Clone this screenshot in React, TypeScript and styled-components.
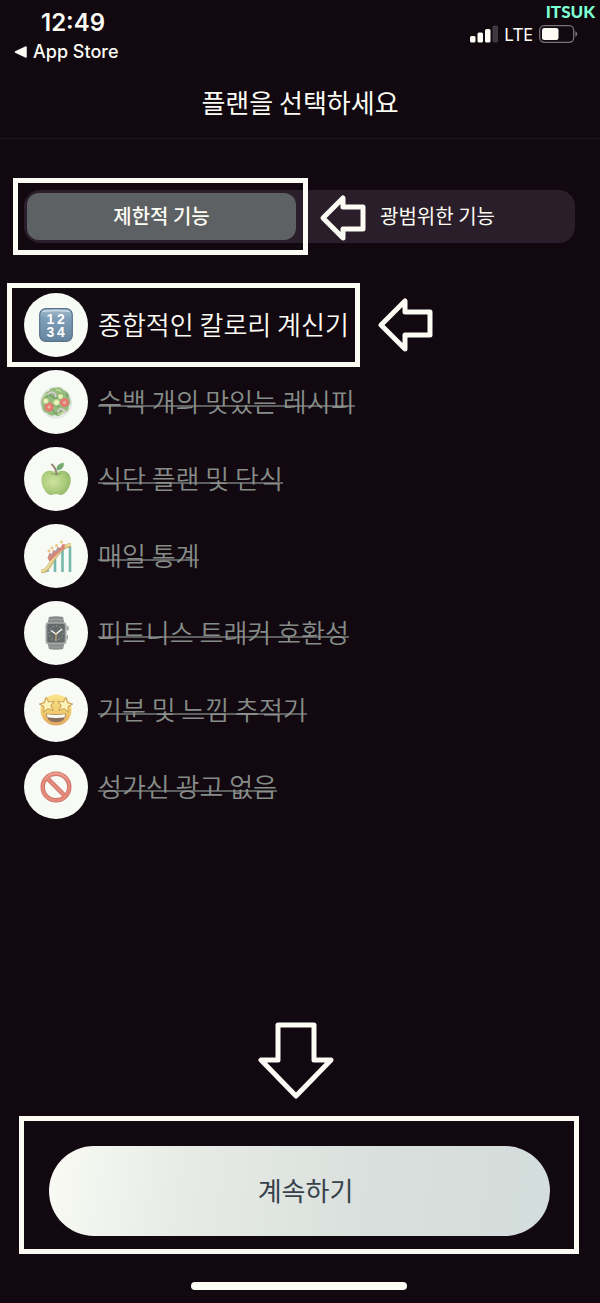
import React, { useState } from 'react';
import styled, { createGlobalStyle, css } from 'styled-components';

const ivory = '#fcfcf4';
const night = '#110810';

const GlobalStyle = createGlobalStyle`
  *, *::before, *::after { box-sizing: border-box; }
  body {
    margin: 0;
    background: ${night};
    color: ${ivory};
    font-family: 'Noto Sans CJK KR', sans-serif;
  }
  button { font-family: inherit; border: 0; padding: 0; cursor: pointer; }
`;

const Screen = styled.div`
  min-height: 100vh;
  display: flex;
  flex-direction: column;
  background: ${night};
`;

const StatusBar = styled.header`
  position: relative;
  display: flex;
  justify-content: space-between;
  align-items: flex-start;
  height: 68px;
  padding: 8px 22px 0 14px;
  font-family: Inter, sans-serif;
`;

const ClockGroup = styled.div`
  display: flex;
  flex-direction: column;
`;

const Clock = styled.time`
  padding-left: 27px;
  font-size: 24px;
  line-height: 30px;
  font-weight: 600;
`;

const BackLink = styled.a`
  display: flex;
  align-items: center;
  gap: 6px;
  color: inherit;
  text-decoration: none;
  font-size: 18px;
  line-height: 28px;
  font-weight: 500;
`;

const Signals = styled.div`
  display: flex;
  align-items: center;
  gap: 6px;
  padding-top: 16px;
`;

const Network = styled.span`
  font-family: 'Noto Sans', sans-serif;
  font-size: 18px;
  line-height: 20px;
`;

const Watermark = styled.span`
  position: absolute;
  top: 2px;
  right: 5px;
  color: #7dffd2;
  font-family: Lato, sans-serif;
  font-size: 17px;
  line-height: 20px;
  font-weight: 900;
`;

const TitleBar = styled.div`
  display: flex;
  justify-content: center;
  align-items: center;
  height: 71px;
  padding-bottom: 2px;
  border-bottom: 1px solid #1c131b;
`;

const Title = styled.h1`
  margin: 0;
  font-size: 26px;
  line-height: 36px;
  font-weight: 400;
`;

const Content = styled.main`
  flex: 1;
  display: flex;
  flex-direction: column;
  padding: 51px 25px 0 24px;
`;

const Tabs = styled.div`
  display: grid;
  grid-template-columns: 1fr 1fr;
  gap: 7px;
  height: 53px;
  padding: 3px;
  border-radius: 16px;
  background: #2a1e2a;
`;

const TabCell = styled.div`
  position: relative;
  display: grid;
`;

const Tab = styled.button<{ $active: boolean }>`
  padding-bottom: 2px;
  border-radius: 12px;
  background: ${({ $active }) => ($active ? '#5e6163' : 'transparent')};
  color: ${ivory};
  font-size: 20px;
  line-height: 28px;
  font-weight: ${({ $active }) => ($active ? 500 : 400)};
`;

const frame = css`
  border: 5px solid ${ivory};
`;

const TabFrame = styled.span`
  ${frame}
  position: absolute;
  inset: -15px -12px -15px -14px;
  pointer-events: none;
`;

const Pointer = styled.span<{ $gap: number }>`
  position: absolute;
  z-index: 1;
  top: 0;
  bottom: 0;
  left: calc(100% + ${({ $gap }) => $gap}px);
  display: flex;
  align-items: center;
  pointer-events: none;
`;

const Features = styled.ul`
  display: flex;
  flex-direction: column;
  align-items: flex-start;
  gap: 13px;
  margin: 50px 0 40px;
  padding: 0;
  list-style: none;
`;

const Feature = styled.li`
  position: relative;
  display: flex;
  align-items: center;
  gap: 10px;
`;

const FeatureFrame = styled.span`
  ${frame}
  position: absolute;
  inset: -10px -11px -10px -17px;
  pointer-events: none;
`;

const Badge = styled.span<{ $included: boolean }>`
  display: grid;
  place-items: center;
  width: 64px;
  height: 64px;
  flex: none;
  border-radius: 50%;
  background: #f7faf5;
  svg { opacity: ${({ $included }) => ($included ? 1 : 0.75)}; }
`;

const FeatureName = styled.span<{ $included: boolean }>`
  position: relative;
  padding-bottom: 2px;
  font-size: 26px;
  line-height: 36px;
  font-weight: 350;
  color: ${({ $included }) => ($included ? ivory : '#868c88')};

  ${({ $included }) => !$included && css`
    &::after {
      content: '';
      position: absolute;
      top: 22px;
      left: 0;
      right: 0;
      border-top: 2px solid #8f969199;
    }
  `}
`;

const Footer = styled.footer`
  display: flex;
  flex-direction: column;
  align-items: center;
  padding: 0 21px 13px 19px;
`;

const DownPointer = styled.div`
  display: flex;
  padding-right: 7px;
`;

const ContinueFrame = styled.div`
  ${frame}
  align-self: stretch;
  margin: 17px 0 28px;
  padding: 25px 24px 13px 25px;
`;

const ContinueButton = styled.button`
  display: block;
  width: 100%;
  height: 90px;
  padding: 0 0 2px 12px;
  border-radius: 45px;
  background: linear-gradient(100deg, #f8f9f3 2%, #e6ebe6 28%, #d9dfdc 65%, #d3dddb 100%);
  color: #37414b;
  font-size: 26px;
  line-height: 36px;
  font-weight: 400;
`;

const HomeIndicator = styled.div`
  width: 216px;
  height: 8px;
  border-radius: 4px;
  background: ${ivory};
`;

type ArrowProps = { width: number; height: number; d: string };

function Arrow({ width, height, d }: ArrowProps) {
  return (
    <svg width={width} height={height} viewBox={`0 0 ${width} ${height}`} aria-hidden="true">
      <path d={d} fill="none" stroke={ivory} strokeWidth="5" strokeLinejoin="round" />
    </svg>
  );
}

function SignalIcon() {
  return (
    <svg width="28" height="18" viewBox="0 0 28 18" fill={ivory} aria-label="신호">
      <rect x="0" y="11" width="5.5" height="6.5" rx="1.5" />
      <rect x="7.5" y="7.5" width="5.5" height="10" rx="1.5" />
      <rect x="15" y="4" width="5.5" height="13.5" rx="1.5" />
      <rect x="22.5" y="0.5" width="5.5" height="17" rx="1.5" fill="#403840" />
    </svg>
  );
}

function BatteryIcon() {
  return (
    <svg width="39" height="18" viewBox="0 0 39 18" aria-label="배터리">
      <rect x="0.7" y="0.7" width="34" height="16.6" rx="4.5" fill="none" stroke="#77737a" strokeWidth="1.3" />
      <rect x="3" y="3" width="16.5" height="12" rx="2.3" fill={ivory} />
      <path d="M36.3 6.2c2.6 1.2 2.6 4.4 0 5.6z" fill="#77737a" />
    </svg>
  );
}

const iconProps = { width: 34, height: 34, viewBox: '0 0 34 34', 'aria-hidden': true };

function NumbersIcon() {
  return (
    <svg {...iconProps}>
      <defs>
        <linearGradient id="key" x1="0" y1="0" x2="0" y2="1">
          <stop offset="0" stopColor="#a3bccd" />
          <stop offset="0.3" stopColor="#7f9fb8" />
          <stop offset="1" stopColor="#66859f" />
        </linearGradient>
      </defs>
      <rect x="0.7" y="0.7" width="32.6" height="32.6" rx="6" fill="url(#key)" stroke="#56728a" strokeWidth="1.2" />
      <path d="M4 3.3Q17 1.8 30 3.3" stroke="#cbdbe5" strokeWidth="1.4" fill="none" strokeLinecap="round" />
      <text fill="#fff" fontFamily="'Liberation Sans', sans-serif" fontWeight="700" fontSize="14">
        <tspan x="7.5 18" y="15.5">12</tspan>
        <tspan x="7.5 18" y="28.5">34</tspan>
      </text>
    </svg>
  );
}

function SaladIcon() {
  return (
    <svg {...iconProps}>
      <circle cx="17" cy="17.5" r="15.5" fill="#e6ebe7" stroke="#d5dcd7" />
      <path d="M4 12q1-5 6-6 2-4 7-3 4-2 7 2 6 2 6 7 3 5 0 9 0 6-6 7-4 5-8 2-5 2-8-2-5-1-5-7-2-5 1-9z" fill="#76a657" />
      <path d="M6 13q4-5 8-1t8-4M9 26q4-3 6 1t8-3M27 9q2 1 2 4M13 22q2-4 7 0" fill="none" stroke="#518945" strokeWidth="2" />
      <path d="M17 5q3-1 5 2M19 29q4 0 7-4M5 12q1-3 3-3" fill="none" stroke="#a6c777" strokeWidth="2" />
      <path d="M8.5 10q3-4.500 6.500-2 3 2 1 4M19 27.500q1-5 5-3 3 1 1 4" fill="none" stroke="#d3bec9" strokeWidth="1.600" />
      <circle cx="10" cy="22" r="4.500" fill="#dc5146" />
      <circle cx="10" cy="22" r="1.600" fill="#ee9a83" />
      <circle cx="25.500" cy="17.500" r="4.500" fill="#dc5146" />
      <circle cx="25.500" cy="17.500" r="1.600" fill="#ee9a83" />
      <g fill="#e6efa8" stroke="#a1bf61" strokeWidth="0.900">
        <circle cx="17.500" cy="17.500" r="3" />
        <circle cx="6.800" cy="16" r="2.700" />
        <circle cx="21.500" cy="11.500" r="2.500" />
      </g>
    </svg>
  );
}

function AppleIcon() {
  return (
    <svg {...iconProps}>
      <defs>
        <radialGradient id="apple" cx="0.4" cy="0.45" r="0.65">
          <stop offset="0" stopColor="#c1dc84" />
          <stop offset="0.6" stopColor="#94bf55" />
          <stop offset="1" stopColor="#6f9f3d" />
        </radialGradient>
      </defs>
      <path d="M17 10.5C20 8.7 24 7.8 28 10.2c5.5 3.5 4.3 12.2.8 17.2-3.2 5.2-6.7 6.4-9 5.1-1.8-.8-3.8-.8-5.6 0-2.6 1.3-6.3-.4-9-5.1C2 22.2.7 13.5 6 10.2c4-2.4 8-1.5 11 .3z" fill="url(#apple)" />
      <path d="M12.2 11.1q5 3 9.8 0" stroke="#658f38" strokeWidth="1.1" fill="none" />
      <path d="M17.5 12.2Q17 6 12.8 2.5" stroke="#765b48" strokeWidth="1.9" fill="none" strokeLinecap="round" />
      <path d="M17.6 8.5C17 3.5 20 1.5 24.8.8c.6 4.7-2.5 7.8-7.2 7.7z" fill="#4b9149" />
    </svg>
  );
}

function CoasterIcon() {
  return (
    <svg {...iconProps}>
      <path d="M8.5 27v6M16 20v13M23.500 10v23M31 7v26" stroke="#49a493" strokeWidth="2.600" />
      <path d="M2 32.500c7 0 9-8 14-14.500S25 6.500 32 6" stroke="#ac934e" strokeWidth="4" fill="none" />
      <path d="M2 32c7 0 9-8 14-14.500S25 6 32 5.500" stroke="#e9cf75" strokeWidth="2.600" fill="none" />
      <path d="M8.500 19l2-5 2.500 1 1-4 3 1 1.500-4 3 1 2-4 2.500.5-.5 4-5 3.500-5 5-5 4.500z" fill="#d0604f" />
      <path d="M11 17.500l3-3.500M16 13l4-4" stroke="#7b8291" strokeWidth="1.500" />
      <g fill="#e5b95b">
        <circle cx="10" cy="12" r="1.500" />
        <circle cx="13" cy="9" r="1.500" />
        <circle cx="17.500" cy="6.500" r="1.500" />
        <circle cx="22.500" cy="3" r="1.500" />
      </g>
    </svg>
  );
}

function WatchIcon() {
  return (
    <svg {...iconProps}>
      <path d="M10 1Q17-.5 24 1l1.500 7h-17zM8.500 26h17L24 33q-7 1.500-14 0z" fill="#626668" />
      <path d="M10 3.500h14M9.500 31h15" stroke="#85898a" />
      <rect x="6.500" y="6" width="21" height="22.500" rx="3.500" fill="#888c8c" />
      <rect x="8.200" y="7.800" width="17.600" height="18.800" rx="2" fill="#34393b" />
      <rect x="27.500" y="10" width="2.200" height="4.500" rx="1" fill="#858989" />
      <rect x="27.500" y="19" width="1.500" height="4.500" rx=".7" fill="#858989" />
      <circle cx="17" cy="17" r="7" fill="none" stroke="#a5a9a8" strokeWidth="1" strokeDasharray="1 2.665" />
      <path d="M12 14.500l5 3.500 6-5" stroke="#f3f5f1" strokeWidth="1.500" fill="none" />
      <path d="M17 17v8" stroke="#d69a42" strokeWidth="1" />
    </svg>
  );
}

function StarStruckIcon() {
  const star = 'M0-7 2-2.300 7-2 3.200 1.300 4.400 6.200 0 3.600-4.400 6.200-3.200 1.300-7-2-2-2.300z';
  return (
    <svg {...iconProps}>
      <defs>
        <linearGradient id="face" x1="0" y1="0" x2="0" y2="1">
          <stop offset="0" stopColor="#f7df65" />
          <stop offset="0.6" stopColor="#efb840" />
          <stop offset="1" stopColor="#d8892d" />
        </linearGradient>
      </defs>
      <circle cx="17" cy="17" r="15.500" fill="url(#face)" />
      <path d="M7 20.500q10 2.200 20 0-.8 8.800-10 8.800T7 20.500z" fill="#654129" />
      <path d="M7.800 21q9.200 2 18.400 0l-.7 3.300q-8.500 1.500-17 0z" fill="#fffdf0" />
      <g fill="#fff1a4" stroke="#bc8125" strokeWidth="0.900" strokeLinejoin="round">
        <path d={star} transform="translate(8.200 11.800) rotate(-10) scale(1.080)" />
        <path d={star} transform="translate(25.800 11.800) rotate(10) scale(1.080)" />
      </g>
    </svg>
  );
}

function ProhibitedIcon() {
  return (
    <svg {...iconProps}>
      <g fill="none" stroke="#b9453a">
        <circle cx="17" cy="17" r="13.300" strokeWidth="4.400" />
        <path d="M7.600 7.600l18.800 18.800" strokeWidth="4.400" />
      </g>
      <g fill="none" stroke="#df6453">
        <circle cx="17" cy="17" r="13.300" strokeWidth="2.900" />
        <path d="M7.600 7.600l18.800 18.800" strokeWidth="2.900" />
      </g>
      <path d="M6 9a13.500 13.500 0 0 1 22 0" fill="none" stroke="#ef9b87" strokeWidth="0.900" />
    </svg>
  );
}

const features = [
  { name: '종합적인 칼로리 계신기', Icon: NumbersIcon, included: true },
  { name: '수백 개의 맛있는 레시피', Icon: SaladIcon, included: false },
  { name: '식단 플랜 및 단식', Icon: AppleIcon, included: false },
  { name: '매일 통계', Icon: CoasterIcon, included: false },
  { name: '피트니스 트래커 호환성', Icon: WatchIcon, included: false },
  { name: '기분 및 느낌 추적기', Icon: StarStruckIcon, included: false },
  { name: '성가신 광고 없음', Icon: ProhibitedIcon, included: false },
];

export default function App() {
  const [extended, setExtended] = useState(false);

  return (
    <Screen>
      <GlobalStyle />
      <StatusBar>
        <ClockGroup>
          <Clock>12:49</Clock>
          <BackLink href="#app-store">
            <svg width="13" height="12" viewBox="0 0 13 12" aria-hidden="true">
              <path d="M1.500 6 12 1v10z" fill={ivory} stroke={ivory} strokeWidth="1.500" strokeLinejoin="round" />
            </svg>
            App Store
          </BackLink>
        </ClockGroup>
        <Signals>
          <SignalIcon />
          <Network>LTE</Network>
          <BatteryIcon />
        </Signals>
        <Watermark>ITSUK</Watermark>
      </StatusBar>
      <TitleBar>
        <Title>플랜을 선택하세요</Title>
      </TitleBar>
      <Content>
        <Tabs role="tablist">
          <TabCell>
            <Tab role="tab" aria-selected={!extended} $active={!extended} onClick={() => setExtended(false)}>
              제한적 기능
            </Tab>
            <TabFrame />
            <Pointer $gap={23}>
              <Arrow width={48} height={48} d="M4 25 24 5V14H44V36H24V45Z" />
            </Pointer>
          </TabCell>
          <TabCell>
            <Tab role="tab" aria-selected={extended} $active={extended} onClick={() => setExtended(true)}>
              광범위한 기능
            </Tab>
          </TabCell>
        </Tabs>
        <Features>
          {features.map(({ name, Icon, included }) => (
            <Feature key={name}>
              <Badge $included={included || extended}>
                <Icon />
              </Badge>
              <FeatureName $included={included || extended}>{name}</FeatureName>
              {included && (
                <>
                  <FeatureFrame />
                  <Pointer $gap={28}>
                    <Arrow width={56} height={55} d="M4 27 28 3V14H53V37H28V51Z" />
                  </Pointer>
                </>
              )}
            </Feature>
          ))}
        </Features>
      </Content>
      <Footer>
        <DownPointer>
          <Arrow width={76} height={78} d="M20 4H56V39H73L38 75 3 39H20Z" />
        </DownPointer>
        <ContinueFrame>
          <ContinueButton>계속하기</ContinueButton>
        </ContinueFrame>
        <HomeIndicator />
      </Footer>
    </Screen>
  );
}
